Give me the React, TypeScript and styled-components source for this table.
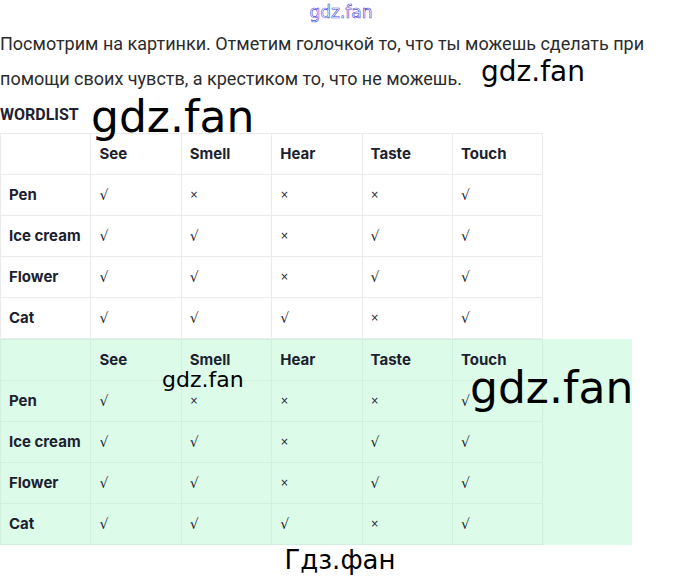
import { Fragment } from 'react';
import styled, { createGlobalStyle } from 'styled-components';

const GlobalStyle = createGlobalStyle`
  body {
    margin: 0;
    background: #ffffff;
    font-family: 'Roboto', 'Liberation Sans', sans-serif;
  }
`;

const senses = ['See', 'Smell', 'Hear', 'Taste', 'Touch'];

const rows: { name: string; marks: boolean[] }[] = [
  { name: 'Pen', marks: [true, false, false, false, true] },
  { name: 'Ice cream', marks: [true, true, false, true, true] },
  { name: 'Flower', marks: [true, true, false, true, true] },
  { name: 'Cat', marks: [true, true, true, false, true] },
];

const Page = styled.div`
  position: relative;
  width: 680px;
  height: 576px;
  overflow: hidden;
`;

const TopMark = styled.div`
  height: 26px;
  text-align: center;
  font-family: 'DejaVu Sans', sans-serif;
  font-size: 17px;
  line-height: 24px;
  color: #ffffff;
  -webkit-text-stroke: 0.6px #4a4ae0;
  padding-left: 2px;
`;

const Intro = styled.p`
  margin: 0;
  font-family: 'Liberation Sans Narrow', 'Roboto', sans-serif;
  font-size: 18px;
  line-height: 35px;
  color: #2b2b2b;
  width: 660px;
`;

const Heading = styled.div`
  padding-top: 10px;
  height: 37px;
  box-sizing: border-box;
  font-family: 'Liberation Sans Narrow', 'Roboto', sans-serif;
  font-weight: 700;
  font-size: 16px;
  line-height: 18px;
  color: #1f2230;
`;

const Block = styled.div<{ $green?: boolean }>`
  width: ${(p) => (p.$green ? '632px' : '543px')};
  background: ${(p) => (p.$green ? '#dcfce9' : '#ffffff')};
`;

const Grid = styled.div<{ $green?: boolean }>`
  display: grid;
  grid-template-columns: repeat(6, 90.4px);
  width: 543px;
  border-top: 1px solid ${(p) => (p.$green ? '#d2f0de' : '#ebebeb')};
  border-left: 1px solid ${(p) => (p.$green ? '#d2f0de' : '#ebebeb')};
  box-sizing: border-box;
`;

const Cell = styled.div<{ $green?: boolean; $bold?: boolean; $small?: boolean }>`
  height: 41px;
  box-sizing: border-box;
  border-right: 1px solid ${(p) => (p.$green ? '#d2f0de' : '#ebebeb')};
  border-bottom: 1px solid ${(p) => (p.$green ? '#d2f0de' : '#ebebeb')};
  padding-left: 8px;
  padding-bottom: 1px;
  display: flex;
  align-items: center;
  font-family: ${(p) => (p.$bold ? "'Inter', 'Lato', sans-serif" : "'DejaVu Sans', sans-serif")};
  font-weight: ${(p) => (p.$bold ? 700 : 400)};
  font-size: ${(p) => (p.$small ? '10px' : p.$bold ? '15px' : '14px')};
  color: #1c2130;
  white-space: nowrap;
`;

const Mark = styled.div<{ $size: number }>`
  position: absolute;
  font-family: 'DejaVu Sans', sans-serif;
  font-size: ${(p) => p.$size}px;
  line-height: 1;
  color: #000;
  pointer-events: none;
  white-space: nowrap;
`;

const Footer = styled.div`
  width: 680px;
  text-align: center;
  font-family: 'DejaVu Sans', sans-serif;
  font-size: 26px;
  line-height: 30px;
  color: #000;
`;

function Table({ green }: { green?: boolean }) {
  return (
    <Block $green={green}>
      <Grid $green={green}>
        <Cell $green={green} />
        {senses.map((s) => (
          <Cell key={s} $green={green} $bold>
            {s}
          </Cell>
        ))}
        {rows.map((r) => (
          <Fragment key={r.name}>
            <Cell $green={green} $bold>
              {r.name}
            </Cell>
            {r.marks.map((m, i) => (
              <Cell key={i} $green={green} $small={!m}>
                {m ? '√' : '×'}
              </Cell>
            ))}
          </Fragment>
        ))}
      </Grid>
    </Block>
  );
}

export default function App() {
  return (
    <Page>
      <GlobalStyle />
      <TopMark>gdz.fan</TopMark>
      <Intro>
        Посмотрим на картинки. Отметим голочкой то, что ты можешь сделать при помощи своих
        чувств, а крестиком то, что не можешь.
      </Intro>
      <Heading>WORDLIST</Heading>
      <Table />
      <Table green />
      <Footer>Гдз.фан</Footer>
      <Mark $size={28} style={{ left: 481, top: 58 }}>gdz.fan</Mark>
      <Mark $size={44} style={{ left: 91, top: 95 }}>gdz.fan</Mark>
      <Mark $size={22} style={{ left: 162, top: 369 }}>gdz.fan</Mark>
      <Mark $size={44} style={{ left: 470, top: 366 }}>gdz.fan</Mark>
    </Page>
  );
}
